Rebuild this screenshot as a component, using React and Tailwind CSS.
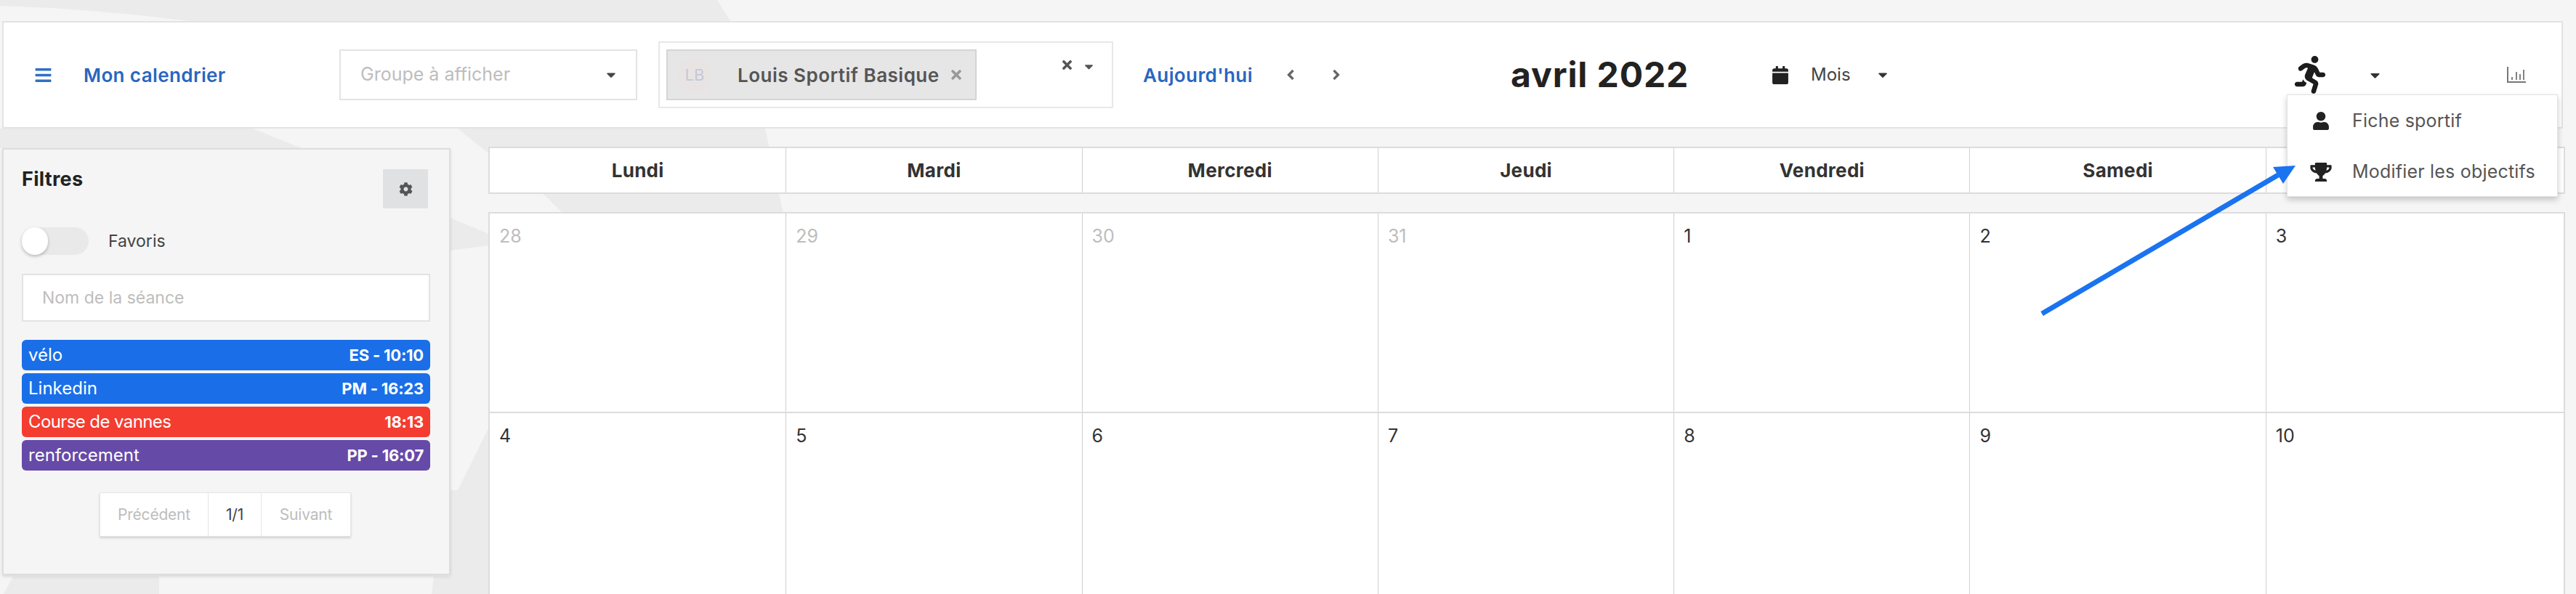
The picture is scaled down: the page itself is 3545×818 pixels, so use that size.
import React from "react";
import { FaBars, FaCaretDown, FaAngleLeft, FaAngleRight, FaCalendar, FaRunning, FaUser, FaTrophy, FaCog, FaTimes } from "react-icons/fa";

const days = ["Lundi", "Mardi", "Mercredi", "Jeudi", "Vendredi", "Samedi", "Dimanche"];
const weeks = [
  [["28", true], ["29", true], ["30", true], ["31", true], ["1"], ["2"], ["3"]],
  [["4"], ["5"], ["6"], ["7"], ["8"], ["9"], ["10"]],
];
const seances = [
  { name: "vélo", info: "ES - 10:10", color: "bg-[#1a6fe8]", spacing: "tracking-[0px]" },
  { name: "Linkedin", info: "PM - 16:23", color: "bg-[#1a6fe8]", spacing: "tracking-[0px]" },
  { name: "Course de vannes", info: "18:13", color: "bg-[#f43c30]", spacing: "tracking-[-0.6px]" },
  { name: "renforcement", info: "PP - 16:07", color: "bg-[#664aa8]", spacing: "tracking-[0px]" },
];

const Background = () => (
  <svg className="absolute inset-0" width="3545" height="818" viewBox="0 0 3545 818" fill="#ebebeb">
    <path d="M0 0L987 0L1005 29L1053 177L1078 294L775 294L750 269L663 204L630 177L260 29Q130 12 0 8Z" />
    <path d="M0 177L348 177L415 204L0 204Z" />
    <path d="M620 300L672 322L672 338L620 345Z" />
    <path d="M672 590L630 675L620 675L620 794L597 794L594 818L672 818Z" />
    <path d="M18 794L219 794L219 818L5 818Z" />
  </svg>
);

const Arrow = () => (
  <svg className="absolute inset-0 pointer-events-none" width="3545" height="818" viewBox="0 0 3545 818">
    <path d="M2810 432L3135 241" stroke="#1a73f0" strokeWidth="7" />
    <path d="M3159 228L3128 230L3142 253Z" fill="#1a73f0" />
  </svg>
);

const TopBar = () => (
  <div className="h-[148px] mr-[18px] flex items-center bg-white border-2 border-[#e3e3e3] pl-[42px]">
    <FaBars className="w-[25px] h-[25px] text-[#2f6fc4]" />
    <span className="ml-[43px] w-[194px] whitespace-nowrap text-[26px] font-semibold tracking-[0.4px] text-[#2a66c0]">Mon calendrier</span>
    <div className="ml-[158px] w-[410px] h-[70px] flex items-center justify-between border-2 border-[#e3e3e3] pl-[27px] pr-[24px]">
      <span className="text-[25px] text-[#bdbdbd]">Groupe à afficher</span>
      <FaCaretDown className="w-[20px] h-[20px] text-[#444]" />
    </div>
    <div className="ml-[29px] w-[626px] h-[92px] flex items-start border-2 border-[#e8e8e8] pl-[9px] pt-[9px]">
      <div className="w-[427px] h-[70px] flex items-center bg-[#e6e6e6] border-2 border-[#d4d4d4] pl-[14px]">
        <span className="w-[46px] h-[46px] flex items-center justify-center rounded-full bg-[#e9e4e4] text-[22px] text-[#c4c8d8]">LB</span>
        <span className="ml-[36px] whitespace-nowrap text-[26px] font-semibold tracking-[0.5px] text-[#555]">Louis Sportif Basique</span>
        <FaTimes className="ml-[13px] w-[20px] h-[20px] text-[#999]" />
      </div>
      <FaTimes className="ml-[115px] mt-[12px] w-[19px] h-[19px] text-[#555]" />
      <FaCaretDown className="ml-[11px] mt-[14px] w-[19px] h-[19px] text-[#555]" />
    </div>
    <span className="ml-[41px] w-[153px] whitespace-nowrap text-[26px] font-semibold tracking-[0.4px] text-[#2a66c0]">Aujourd'hui</span>
    <FaAngleLeft className="ml-[41px] w-[18px] h-[22px] text-[#666]" />
    <FaAngleRight className="ml-[45px] w-[18px] h-[22px] text-[#666]" />
    <span className="ml-[231px] w-[246px] whitespace-nowrap text-[48px] font-bold leading-none tracking-[0.9px] text-[#222]">avril 2022</span>
    <FaCalendar className="ml-[114px] w-[22px] h-[25px] text-[#222]" />
    <span className="ml-[31px] w-[58px] text-[24px] text-[#444]">Mois</span>
    <FaCaretDown className="ml-[31px] w-[20px] h-[20px] text-[#333]" />
    <FaRunning className="ml-[555px] w-[46px] h-[52px] text-[#1c1c1c]" />
    <FaCaretDown className="ml-[56px] w-[21px] h-[21px] text-[#333]" />
    <svg className="ml-[170px]" width="28" height="24" viewBox="0 0 28 24" fill="none" stroke="#777777" strokeWidth="2">
      <path d="M2 1V22H27" />
      <path d="M8 19V15M14 19V8M19 19V11M24 19V5" strokeWidth="1.8" />
    </svg>
  </div>
);

const FiltersPanel = () => (
  <aside className="mt-[2px] w-[617px] h-[588px] shrink-0 bg-[#f5f5f5] border-2 border-[#dedede] pl-[25px] pr-[26px] pt-[27px] shadow-[0_2px_4px_rgba(0,0,0,0.12)]">
    <div className="flex justify-between">
      <span className="mt-[-1px] text-[27px] font-bold leading-[30px] tracking-[0.3px] text-[#222]">Filtres</span>
      <div className="mr-[3px] w-[62px] h-[54px] flex items-center justify-center bg-[#e0e1e2]">
        <FaCog className="w-[19px] h-[19px] text-[#555]" />
      </div>
    </div>
    <div className="mt-[26px] flex items-center">
      <div className="w-[92px] h-[38px] rounded-full bg-[#e9e9e9]">
        <div className="w-[36px] h-[38px] rounded-full bg-white shadow-[0_2px_4px_rgba(0,0,0,0.25)]" />
      </div>
      <span className="ml-[27px] text-[23px] text-[#444]">Favoris</span>
    </div>
    <div className="mt-[26px] h-[66px] flex items-center bg-white border-2 border-[#e3e3e3] pl-[26px] text-[23px] text-[#bdbdbd]">Nom de la séance</div>
    <div className="mt-[25px] flex flex-col gap-[4px]">
      {seances.map((s) => (
        <div key={s.name} className={`h-[42px] flex items-center justify-between rounded-md px-[9px] text-white ${s.color}`}>
          <span className={`text-[24px] ${s.spacing}`}>{s.name}</span>
          <span className="text-[22px] font-bold tracking-[-0.2px]">{s.info}</span>
        </div>
      ))}
    </div>
    <div className="mt-[30px] flex justify-center pr-[2px]">
      <div className="h-[61px] flex items-center bg-white border border-[#e6e6e6] shadow-[0_2px_3px_rgba(0,0,0,0.15)] text-[21px] tracking-[-0.2px] text-[#bdbdbd]">
        <span className="w-[148px] h-full flex items-center justify-center">Précédent</span>
        <span className="w-[74px] h-full flex items-center justify-center border-x border-[#e6e6e6] text-[#444]">1/1</span>
        <span className="w-[122px] h-full flex items-center justify-center">Suivant</span>
      </div>
    </div>
  </aside>
);

const Calendar = () => (
  <div className="ml-[52px] w-[2858px] shrink-0">
    <div className="grid grid-cols-[repeat(6,407.3px)_1fr] h-[65px] bg-white border-2 border-[#dcdcdc]">
      {days.map((d, i) => (
        <div key={d} className={`flex items-center justify-center text-[26px] font-bold tracking-[0.3px] text-[#333] ${i > 0 ? "border-l border-[#d0d0d0]" : ""}`}>{d}</div>
      ))}
    </div>
    <div className="mt-[25px] bg-white border-2 border-b-0 border-[#dcdcdc]">
      {weeks.map((w, r) => (
        <div key={r} className={`grid grid-cols-[repeat(6,407.3px)_1fr] h-[273px] ${r > 0 ? "border-t-2 border-[#dcdcdc]" : ""}`}>
          {w.map(([n, muted], i) => (
            <div key={n} className={`pl-[13px] pt-[13px] text-[25px] leading-[36px] ${muted ? "text-[#bdbdbd]" : "text-[#333]"} ${i > 0 ? "border-l border-[#d0d0d0]" : ""}`}>{n}</div>
          ))}
        </div>
      ))}
    </div>
  </div>
);

const SportifMenu = () => (
  <div className="absolute left-[3147px] top-[130px] w-[373px] h-[141px] bg-white border border-[#e3e3e3] shadow-[0_4px_8px_rgba(0,0,0,0.2)] text-[25px] tracking-[0.2px] text-[#555]">
    <div className="h-[71px] flex items-center pl-[34px]">
      <FaUser className="w-[24px] h-[25px] text-[#222]" />
      <span className="ml-[31px]">Fiche sportif</span>
    </div>
    <div className="h-[69px] flex items-center pl-[31px]">
      <FaTrophy className="w-[30px] h-[26px] text-[#222]" />
      <span className="ml-[28px]">Modifier les objectifs</span>
    </div>
  </div>
);

const App = () => (
  <div className="relative w-[3545px] h-[818px] overflow-hidden bg-[#f5f5f5] font-[Inter,sans-serif]">
    <Background />
    <div className="relative pt-[29px] pl-[3px]">
      <TopBar />
      <div className="mt-[25px] flex items-start">
        <FiltersPanel />
        <Calendar />
      </div>
    </div>
    <SportifMenu />
    <Arrow />
  </div>
);

export default App;
